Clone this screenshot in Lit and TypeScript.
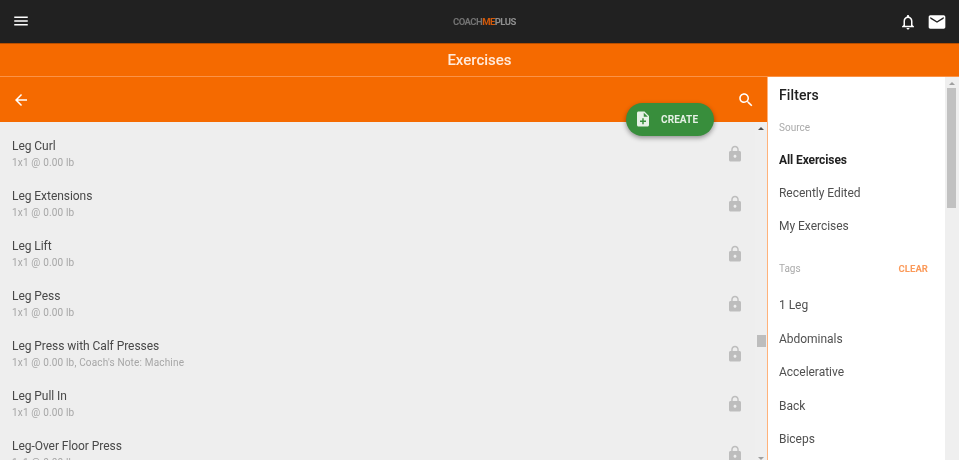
import { LitElement, html, css, svg } from "lit";
import { customElement } from "lit/decorators.js";

const rows: [string, string][] = [
  ["Leg Curl", "1x1 @ 0.00 lb"],
  ["Leg Extensions", "1x1 @ 0.00 lb"],
  ["Leg Lift", "1x1 @ 0.00 lb"],
  ["Leg Pess", "1x1 @ 0.00 lb"],
  ["Leg Press with Calf Presses", "1x1 @ 0.00 lb, Coach's Note: Machine"],
  ["Leg Pull In", "1x1 @ 0.00 lb"],
  ["Leg-Over Floor Press", "1x1 @ 0.00 lb"],
];
const tags = ["1 Leg", "Abdominals", "Accelerative", "Back", "Biceps"];

const icon = (d: string, size = 24) => html`<svg width=${size} height=${size} viewBox="0 0 24 24" fill="currentColor">${svg`<path d=${d}></path>`}</svg>`;

@customElement("app-root")
export class AppRoot extends LitElement {
  static styles = css`
    :host { display: block; width: 959px; height: 460px; overflow: hidden; font-family: Roboto, "Liberation Sans", sans-serif; position: relative; background: #fff; filter: blur(0.3px); }
    .top { height: 43px; background: #212121; border-bottom: 1px solid #b84f00; display: flex; align-items: center; justify-content: space-between; padding: 0 12px 0 12px; color: #fff; box-sizing: content-box; }
    .top .menu { margin-top: -1px; }
    .top .right { display: flex; align-items: center; gap: 10px; }
    .top svg { display: block; }
    .logo { font-size: 9.5px; font-weight: 700; letter-spacing: -0.55px; color: #737373; position: absolute; left: 453px; top: 16px; line-height: 12px; }
    .logo b { color: #d2590a; font-weight: 700; }
    .logo i { font-style: normal; color: #8f8f8f; }
    .title { height: 32px; background: #f56a00; color: #ffeadb; font-size: 15px; font-weight: 500; display: flex; align-items: center; justify-content: center; border-bottom: 1px solid #fb9347; }
    .main { display: flex; height: 383px; }
    .left { width: 767px; flex: none; position: relative; }
    .bar { height: 45px; background: #f56a00; color: #fff; display: flex; align-items: center; justify-content: space-between; padding: 0 12px 0 12px; }
    .bar svg { display: block; }
    .list { height: 338px; background: #eeeeee; overflow: hidden; padding-right: 12px; position: relative; }
    .row { height: 50px; display: flex; align-items: center; justify-content: space-between; padding: 0 11px 0 12px; }
    .list .rows { padding-top: 7px; }
    .name { font-size: 12px; color: #484848; line-height: 15px; letter-spacing: -0.05px; }
    .sub { font-size: 10px; color: #a6a6a6; line-height: 14px; margin-top: 2px; letter-spacing: 0.17px; }
    .lock { color: #bdbdbd; display: flex; }
    .track { position: absolute; right: 0; top: 0; bottom: 0; width: 12px; background: #efefef; }
    .thumb { position: absolute; right: 1px; top: 213px; width: 9px; height: 12px; background: #bdbdbd; }
    .arrow { position: absolute; right: 3px; width: 0; height: 0; border-left: 3px solid transparent; border-right: 3px solid transparent; }
    .arrow.up { top: 5px; border-bottom: 3px solid #505050; }
    .arrow.down { top: 335px; border-top: 3px solid #a0a0a0; }
    .fab { position: absolute; left: 626px; top: 25.5px; width: 88px; height: 33px; border-radius: 17px; background: #388e3c; color: #e6f1e6; display: flex; align-items: center; gap: 9px; padding-left: 8px; box-sizing: border-box; font-size: 10px; font-weight: 700; letter-spacing: 0.1px; box-shadow: 0 2px 5px rgba(0,0,0,.4); }
    .fab svg { display: block; flex: none; }
    .filters { flex: 1; border-left: 1px solid #ffb27a; display: flex; background: #fff; min-width: 0; }
    .fbody { flex: 1; padding: 0 11px; min-width: 0; }
    .fbody h2 { margin: 0; font-size: 14px; font-weight: 500; color: #212121; line-height: 18px; padding-top: 9px; letter-spacing: 0.1px; }
    .label { font-size: 10px; color: #aaa; line-height: 12px; margin-top: 18px; }
    .opt { font-size: 12px; color: #505050; height: 33.4px; display: flex; align-items: center; letter-spacing: -0.03px; }
    .opt.on { font-weight: 700; color: #212121; letter-spacing: -0.1px; }
    .source { margin-top: 9px; }
    .taghead { display: flex; justify-content: space-between; align-items: center; padding-right: 6px; margin-top: 20px; font-size: 10px; line-height: 12px; }
    .taghead span:first-child { color: #aaa; }
    .clear { color: #fb9a5a; font-weight: 700; font-size: 9.5px; letter-spacing: 0.05px; }
    .tags { margin-top: 13.5px; }
    .scroll { width: 14px; background: #efefef; position: relative; flex: none; }
    .scroll .t { position: absolute; left: 2px; right: 3px; top: 11px; height: 120px; background: #c1c1c1; }
    .scroll .a { position: absolute; left: 4px; top: 5px; width: 0; height: 0; border-left: 3px solid transparent; border-right: 3px solid transparent; border-bottom: 3px solid #a0a0a0; }
  `;

  render() {
    const lock = "M18 8h-1V6c0-2.76-2.24-5-5-5S7 3.24 7 6v2H6c-1.1 0-2 .9-2 2v10c0 1.1.9 2 2 2h12c1.1 0 2-.9 2-2V10c0-1.1-.9-2-2-2zm-6 9c-1.1 0-2-.9-2-2s.9-2 2-2 2 .9 2 2-.9 2-2 2zm3.1-9H8.9V6c0-1.71 1.39-3.1 3.1-3.1 1.71 0 3.1 1.39 3.1 3.1v2z";
    return html`
      <div class="top">
        <div class="menu">${icon("M3 18h18v-2H3v2zm0-5h18v-2H3v2zm0-7v2h18V6H3z", 18)}</div>
        <div class="logo">COACH<b>ME</b><i>PLUS</i></div>
        <div class="right">
          ${icon("M12 22c1.1 0 2-.9 2-2h-4c0 1.1.9 2 2 2zm6-6v-5c0-3.07-1.63-5.64-4.5-6.32V4c0-.83-.67-1.5-1.5-1.5s-1.5.67-1.5 1.5v.68C7.64 5.36 6 7.92 6 11v5l-2 2v1h16v-1l-2-2zm-2 1H8v-6c0-2.48 1.51-4.5 4-4.5s4 2.02 4 4.5v6z", 18)}
          ${icon("M20 4H4c-1.1 0-1.99.9-1.99 2L2 18c0 1.1.9 2 2 2h16c1.1 0 2-.9 2-2V6c0-1.1-.9-2-2-2zm0 4l-8 5-8-5V6l8 5 8-5v2z", 20)}
        </div>
      </div>
      <div class="title">Exercises</div>
      <div class="main">
        <div class="left">
          <div class="bar">
            ${icon("M20 11H7.83l5.59-5.59L12 4l-8 8 8 8 1.41-1.41L7.83 13H20v-2z", 18)}
            ${icon("M15.5 14h-.79l-.28-.27C15.41 12.59 16 11.11 16 9.5 16 5.91 13.09 3 9.5 3S3 5.91 3 9.5 5.91 16 9.5 16c1.61 0 3.09-.59 4.23-1.57l.27.28v.79l5 4.99L20.49 19l-4.99-5zm-6 0C7.01 14 5 11.99 5 9.5S7.01 5 9.5 5 14 7.01 14 9.5 11.99 14 9.5 14z", 18)}
          </div>
          <div class="list">
            <div class="rows">
              ${rows.map(([n, s]) => html`<div class="row"><div><div class="name">${n}</div><div class="sub">${s}</div></div><div class="lock">${icon(lock, 18)}</div></div>`)}
            </div>
            <div class="track"><div class="arrow up"></div><div class="thumb"></div><div class="arrow down"></div></div>
          </div>
          <div class="fab">
            ${icon("M14 2H6c-1.1 0-1.99.9-1.99 2L4 20c0 1.1.89 2 1.99 2H18c1.1 0 2-.9 2-2V8l-6-6zm2 14h-3v3h-2v-3H8v-2h3v-3h2v3h3v2zm-3-7V3.5L18.5 9H13z", 18)}
            <span>CREATE</span>
          </div>
        </div>
        <div class="filters">
          <div class="fbody">
            <h2>Filters</h2>
            <div class="label">Source</div>
            <div class="source">
              <div class="opt on">All Exercises</div>
              <div class="opt">Recently Edited</div>
              <div class="opt">My Exercises</div>
            </div>
            <div class="taghead"><span>Tags</span><span class="clear">CLEAR</span></div>
            <div class="tags">${tags.map((t) => html`<div class="opt">${t}</div>`)}</div>
          </div>
          <div class="scroll"><div class="a"></div><div class="t"></div></div>
        </div>
      </div>
    `;
  }
}
